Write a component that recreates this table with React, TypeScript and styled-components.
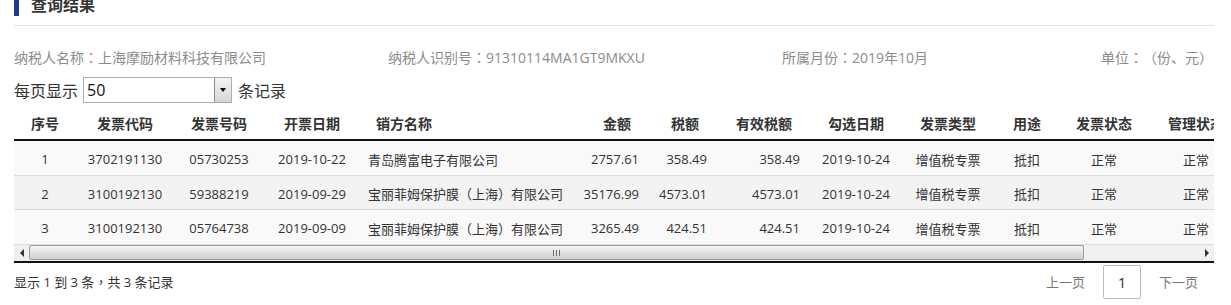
import React from "react";
import styled, { createGlobalStyle } from "styled-components";

const GlobalStyle = createGlobalStyle`
    html, body {
        margin: 0;
        padding: 0;
        background: #fff;
        overflow: hidden;
    }
    body {
        font-family: "Open Sans", "Noto Sans CJK SC", sans-serif;
        color: #333;
        text-spacing-trim: space-all;
    }
`;

const Page = styled.div`
    width: 1200px;
    padding-left: 14px;
`;

const TitleBar = styled.div`
    display: flex;
    align-items: center;
    margin-top: -5px;
    padding-bottom: 9px;
    border-bottom: 1px solid #e6e6e6;
`;

const TitleMark = styled.div`
    width: 5px;
    height: 21px;
    background: #1b3b8f;
    margin-right: 12px;
`;

const TitleText = styled.h2`
    margin: 0;
    font-size: 16px;
    line-height: 21px;
    font-weight: bold;
    color: #333;
`;

const InfoRow = styled.div`
    display: grid;
    grid-template-columns: 374px 394px 319px auto;
    margin-top: 21px;
    font-size: 14px;
    line-height: 20px;
    color: #8c8c8c;
`;

// centred full-width punctuation, like the original font
const Punct = styled.span`
    font-family: "Noto Sans CJK TC", sans-serif;
`;

const PageSizeRow = styled.div`
    display: flex;
    align-items: center;
    margin-top: 9px;
    font-size: 16px;
    color: #333;
`;

const SelectBox = styled.div`
    display: flex;
    width: 149px;
    height: 26px;
    box-sizing: border-box;
    border: 1px solid #adadad;
    margin: 0 6px 0 5px;
    background: #fff;
`;

const SelectValue = styled.div`
    flex: 1;
    padding-left: 3px;
    line-height: 24px;
    font-size: 16px;
    color: #111;
`;

const SelectArrow = styled.div`
    width: 16px;
    border-left: 1px solid #8a8a8a;
    background: linear-gradient(#f4f4f4, #d6d6d6);
    display: flex;
    align-items: center;
    justify-content: center;

    &::after {
        content: "";
        border-left: 3px solid transparent;
        border-right: 3px solid transparent;
        border-top: 4px solid #000;
    }
`;

const TableWrap = styled.div`
    width: 1200px;
    overflow: hidden;
    margin-top: 4px;
`;

const Table = styled.table`
    border-collapse: separate;
    border-spacing: 0;
    table-layout: fixed;
    width: 1332px;
`;

const Th = styled.th<{ $align: string; $width: number }>`
    width: ${({ $width }) => $width}px;
    height: 34px;
    box-sizing: border-box;
    padding: 0 16px;
    font-size: 14px;
    font-weight: bold;
    color: #333;
    text-align: ${({ $align }) => $align};
    white-space: nowrap;
    overflow: hidden;
    border-bottom: 2px solid #111;
    ${({ $align }) => ($align === "center" ? "padding: 0;" : "")}
`;

const Tr = styled.tr<{ $even: boolean }>`
    background: ${({ $even }) => ($even ? "#f3f3f3" : "#f9f9f9")};
`;

const Td = styled.td<{ $align: string }>`
    height: 34.5px;
    box-sizing: border-box;
    padding: 3px 8px 0;
    font-size: 13px;
    color: #333;
    text-align: ${({ $align }) => $align};
    white-space: nowrap;
    overflow: hidden;
    border-bottom: 1px solid #dcdcdc;
    ${({ $align }) => ($align === "center" ? "padding: 3px 0 0;" : "")}
`;

const ScrollBar = styled.div`
    display: flex;
    align-items: center;
    width: 1200px;
    height: 16px;
    background: #f0f0f0;
    border-bottom: 2px solid #111;
`;

const ScrollButton = styled.div<{ $dir: "left" | "right" }>`
    width: 15px;
    height: 16px;
    display: flex;
    align-items: center;
    justify-content: center;

    &::after {
        content: "";
        border-top: 4px solid transparent;
        border-bottom: 4px solid transparent;
        ${({ $dir }) =>
            $dir === "left" ? "border-right: 4px solid #333;" : "border-left: 4px solid #333;"}
    }
`;

const ScrollTrack = styled.div`
    flex: 1;
    height: 16px;
    display: flex;
    align-items: center;
`;

const ScrollThumb = styled.div`
    width: 1055px;
    height: 15px;
    box-sizing: border-box;
    border: 1px solid #9c9c9c;
    border-radius: 2px;
    background: linear-gradient(#f6f6f6, #e4e4e4 45%, #cfcfcf);
    display: flex;
    align-items: center;
    justify-content: center;
    gap: 2px;
`;

const Grip = styled.span`
    width: 1px;
    height: 6px;
    background: #6f6f6f;
`;

const Footer = styled.div`
    display: flex;
    align-items: center;
    justify-content: space-between;
    margin-top: 2px;
    width: 1200px;
`;

const Summary = styled.div`
    font-size: 13px;
    color: #333;
`;

const Pager = styled.div`
    display: flex;
    align-items: center;
    gap: 18px;
    padding-right: 16px;
`;

const PagerLink = styled.span`
    font-size: 13px;
    color: #777;
`;

const PageBox = styled.div`
    width: 38px;
    height: 34px;
    box-sizing: border-box;
    border: 1px solid #bdbdbd;
    border-radius: 2px;
    display: flex;
    align-items: center;
    justify-content: center;
    font-size: 15px;
    color: #333;
`;

const columns = [
    { title: "序号", key: "no", width: 62, align: "center" },
    { title: "发票代码", key: "code", width: 98, align: "center" },
    { title: "发票号码", key: "num", width: 90, align: "center" },
    { title: "开票日期", key: "date", width: 96, align: "center" },
    { title: "销方名称", key: "seller", width: 211, align: "left" },
    { title: "金额", key: "amount", width: 76, align: "right" },
    { title: "税额", key: "tax", width: 68, align: "right" },
    { title: "有效税额", key: "validTax", width: 93, align: "right" },
    { title: "勾选日期", key: "checkDate", width: 96, align: "center" },
    { title: "发票类型", key: "type", width: 88, align: "center" },
    { title: "用途", key: "usage", width: 70, align: "center" },
    { title: "发票状态", key: "status", width: 84, align: "center" },
    { title: "管理状态", key: "manage", width: 100, align: "center" },
    { title: "备注", key: "memo", width: 100, align: "center" },
];

const rows: Record<string, string>[] = [
    {
        no: "1", code: "3702191130", num: "05730253", date: "2019-10-22",
        seller: "青岛腾富电子有限公司", amount: "2757.61", tax: "358.49", validTax: "358.49",
        checkDate: "2019-10-24", type: "增值税专票", usage: "抵扣", status: "正常", manage: "正常", memo: "",
    },
    {
        no: "2", code: "3100192130", num: "59388219", date: "2019-09-29",
        seller: "宝丽菲姆保护膜（上海）有限公司", amount: "35176.99", tax: "4573.01", validTax: "4573.01",
        checkDate: "2019-10-24", type: "增值税专票", usage: "抵扣", status: "正常", manage: "正常", memo: "",
    },
    {
        no: "3", code: "3100192130", num: "05764738", date: "2019-09-09",
        seller: "宝丽菲姆保护膜（上海）有限公司", amount: "3265.49", tax: "424.51", validTax: "424.51",
        checkDate: "2019-10-24", type: "增值税专票", usage: "抵扣", status: "正常", manage: "正常", memo: "",
    },
];

const App: React.FC = () => {
    return (
        <>
            <GlobalStyle />
            <Page>
                <TitleBar>
                    <TitleMark />
                    <TitleText>查询结果</TitleText>
                </TitleBar>

                <InfoRow>
                    <span>纳税人名称<Punct>：</Punct>上海摩励材料科技有限公司</span>
                    <span>纳税人识别号<Punct>：</Punct>91310114MA1GT9MKXU</span>
                    <span>所属月份<Punct>：</Punct>2019年10月</span>
                    <span>单位<Punct>：</Punct>（份、元）</span>
                </InfoRow>

                <PageSizeRow>
                    每页显示
                    <SelectBox>
                        <SelectValue>50</SelectValue>
                        <SelectArrow />
                    </SelectBox>
                    条记录
                </PageSizeRow>

                <TableWrap>
                    <Table>
                        <thead>
                            <tr>
                                {columns.map((c) => (
                                    <Th key={c.key} $align={c.align} $width={c.width}>
                                        {c.title}
                                    </Th>
                                ))}
                            </tr>
                        </thead>
                        <tbody>
                            {rows.map((r, i) => (
                                <Tr key={r.no} $even={i % 2 === 1}>
                                    {columns.map((c) => (
                                        <Td key={c.key} $align={c.align}>
                                            {r[c.key]}
                                        </Td>
                                    ))}
                                </Tr>
                            ))}
                        </tbody>
                    </Table>
                </TableWrap>

                {/* fake windows-style scrollbar */}
                <ScrollBar>
                    <ScrollButton $dir="left" />
                    <ScrollTrack>
                        <ScrollThumb>
                            <Grip />
                            <Grip />
                            <Grip />
                        </ScrollThumb>
                    </ScrollTrack>
                    <ScrollButton $dir="right" />
                </ScrollBar>

                <Footer>
                    <Summary>显示 1 到 3 条<Punct>，</Punct>共 3 条记录</Summary>
                    <Pager>
                        <PagerLink>上一页</PagerLink>
                        <PageBox>1</PageBox>
                        <PagerLink>下一页</PagerLink>
                    </Pager>
                </Footer>
            </Page>
        </>
    );
};

export default App;
